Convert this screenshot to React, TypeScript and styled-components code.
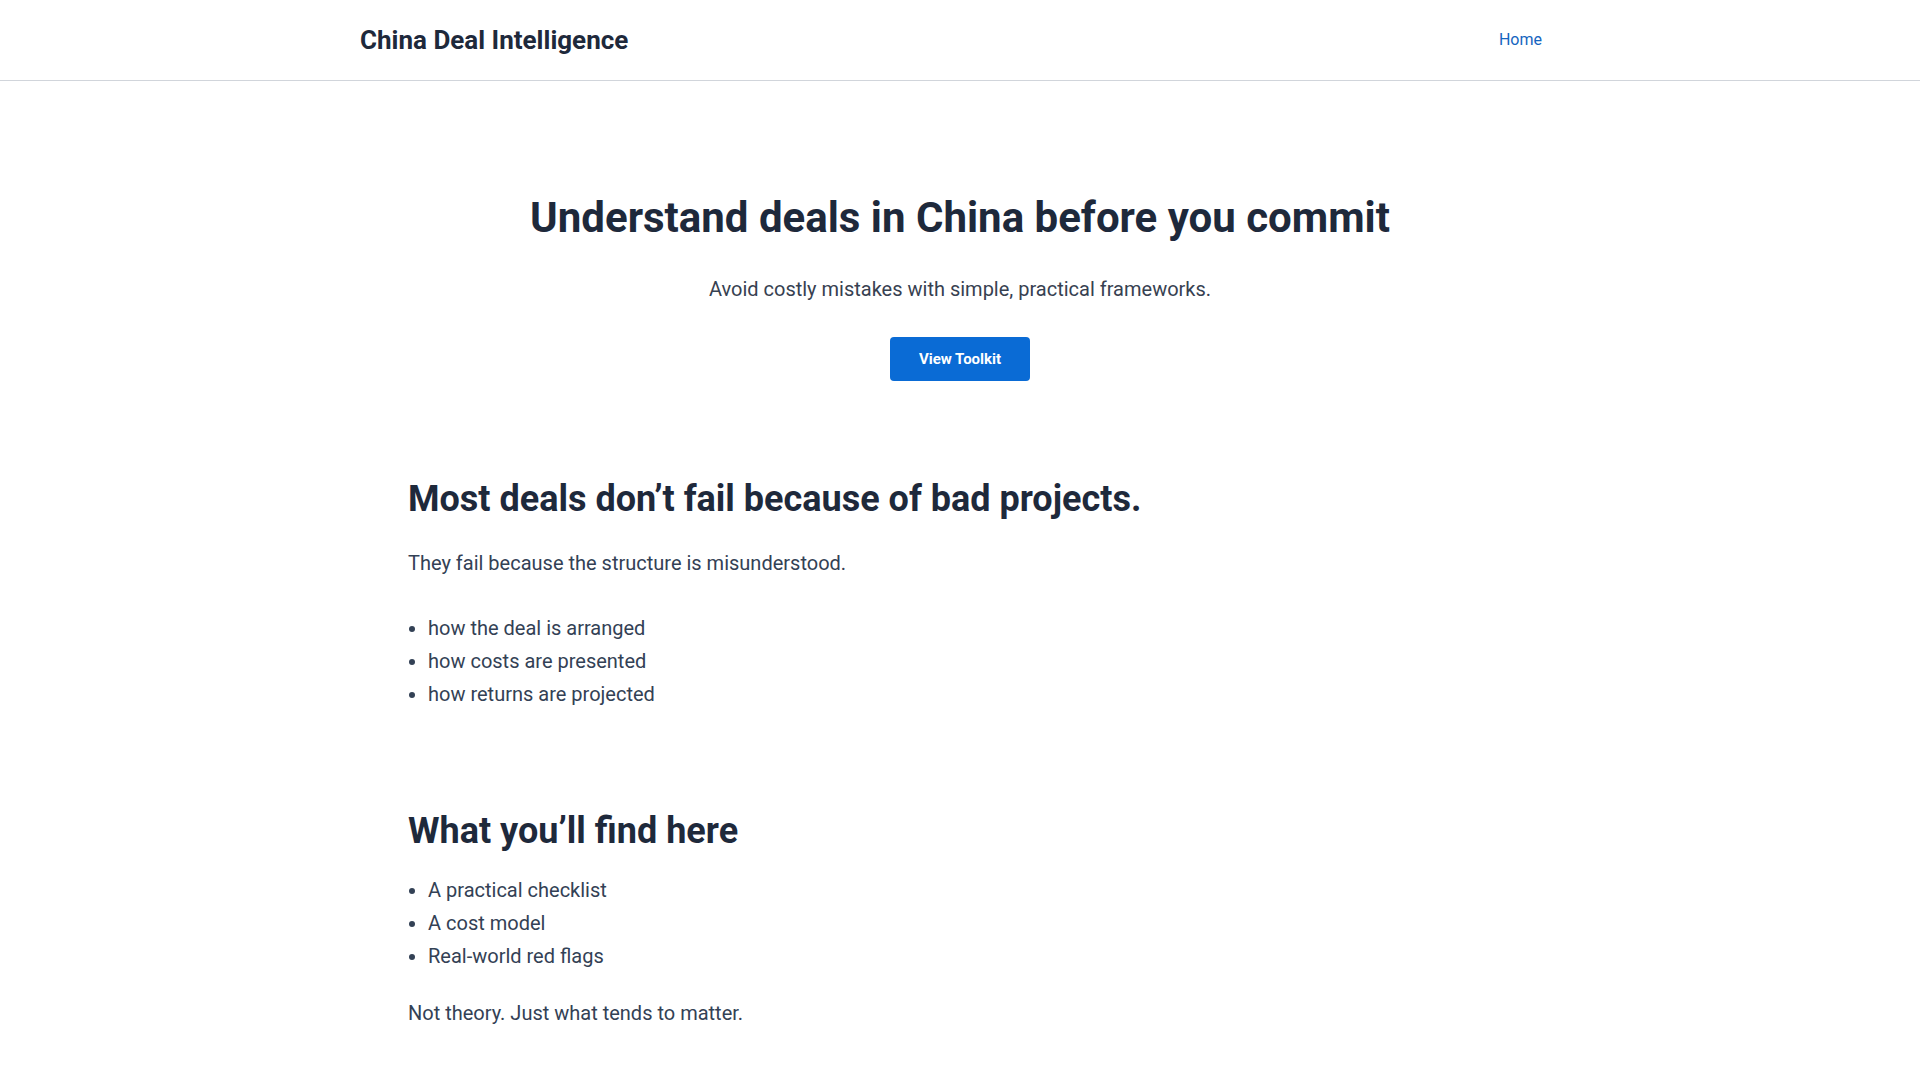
import styled, { createGlobalStyle } from 'styled-components';

const GlobalStyle = createGlobalStyle`
  * {
    box-sizing: border-box;
  }
  body {
    margin: 0;
    background: #ffffff;
    color: #334155;
    font-family: Roboto, 'Liberation Sans', Arial, sans-serif;
  }
`;

const Header = styled.header`
  border-bottom: 1px solid #d1d5db;
  background: #ffffff;
`;

const HeaderInner = styled.div`
  max-width: 1200px;
  height: 80px;
  margin: 0 auto;
  display: flex;
  align-items: center;
  justify-content: space-between;
`;

const Brand = styled.a`
  font-size: 26px;
  font-weight: 700;
  color: #1e293b;
  text-decoration: none;
  margin-top: -1px;
`;

const NavLink = styled.a`
  font-size: 16px;
  color: #1565c0;
  text-decoration: none;
  padding: 8px 18px;
  margin-top: -1px;
`;

const Main = styled.main`
  max-width: 1200px;
  margin: 0 auto;
  padding: 0 48px 40px;
`;

const Hero = styled.section`
  display: flex;
  flex-direction: column;
  align-items: center;
  text-align: center;
  padding: 112px 0 95px;
`;

const Title = styled.h1`
  margin: 0;
  font-size: 42px;
  line-height: 1.2;
  font-weight: 700;
  color: #1e293b;
`;

const Lead = styled.p`
  margin: 30px 0 0;
  font-size: 20px;
  line-height: 1.6;
  color: #374151;
`;

const Button = styled.a`
  display: inline-block;
  margin-top: 32px;
  padding: 11px 29px;
  font-size: 15px;
  line-height: 22px;
  font-weight: 700;
  color: #ffffff;
  background: #0a6bd5;
  border-radius: 4px;
  text-decoration: none;
`;

const Section = styled.section<{ $gap?: number }>`
  margin-bottom: ${({ $gap }) => $gap ?? 0}px;
`;

const Heading = styled.h2`
  margin: 0;
  font-size: 36px;
  line-height: 1.3;
  font-weight: 700;
  color: #1e293b;
`;

const Paragraph = styled.p<{ $top: number }>`
  margin: ${({ $top }) => $top}px 0 0;
  font-size: 20px;
  line-height: 1.6;
  color: #334155;
`;

const List = styled.ul<{ $top: number }>`
  margin: ${({ $top }) => $top}px 0 0;
  padding-left: 20px;
  list-style: disc;
`;

const Item = styled.li`
  font-size: 20px;
  line-height: 33px;
  color: #334155;
`;

const problems = ['how the deal is arranged', 'how costs are presented', 'how returns are projected'];
const offers = ['A practical checklist', 'A cost model', 'Real-world red flags'];

export default function App() {
  return (
    <>
      <GlobalStyle />
      <Header>
        <HeaderInner>
          <Brand href='#'>China Deal Intelligence</Brand>
          <NavLink href='#'>Home</NavLink>
        </HeaderInner>
      </Header>
      <Main>
        <Hero>
          <Title>Understand deals in China before you commit</Title>
          <Lead>Avoid costly mistakes with simple, practical frameworks.</Lead>
          <Button href='#'>View Toolkit</Button>
        </Hero>
        <Section $gap={97}>
          <Heading>Most deals don’t fail because of bad projects.</Heading>
          <Paragraph $top={24}>They fail because the structure is misunderstood.</Paragraph>
          <List $top={33}>
            {problems.map((p) => (
              <Item key={p}>{p}</Item>
            ))}
          </List>
        </Section>
        <Section>
          <Heading>What you’ll find here</Heading>
          <List $top={19}>
            {offers.map((o) => (
              <Item key={o}>{o}</Item>
            ))}
          </List>
          <Paragraph $top={24}>Not theory. Just what tends to matter.</Paragraph>
        </Section>
      </Main>
    </>
  );
}
